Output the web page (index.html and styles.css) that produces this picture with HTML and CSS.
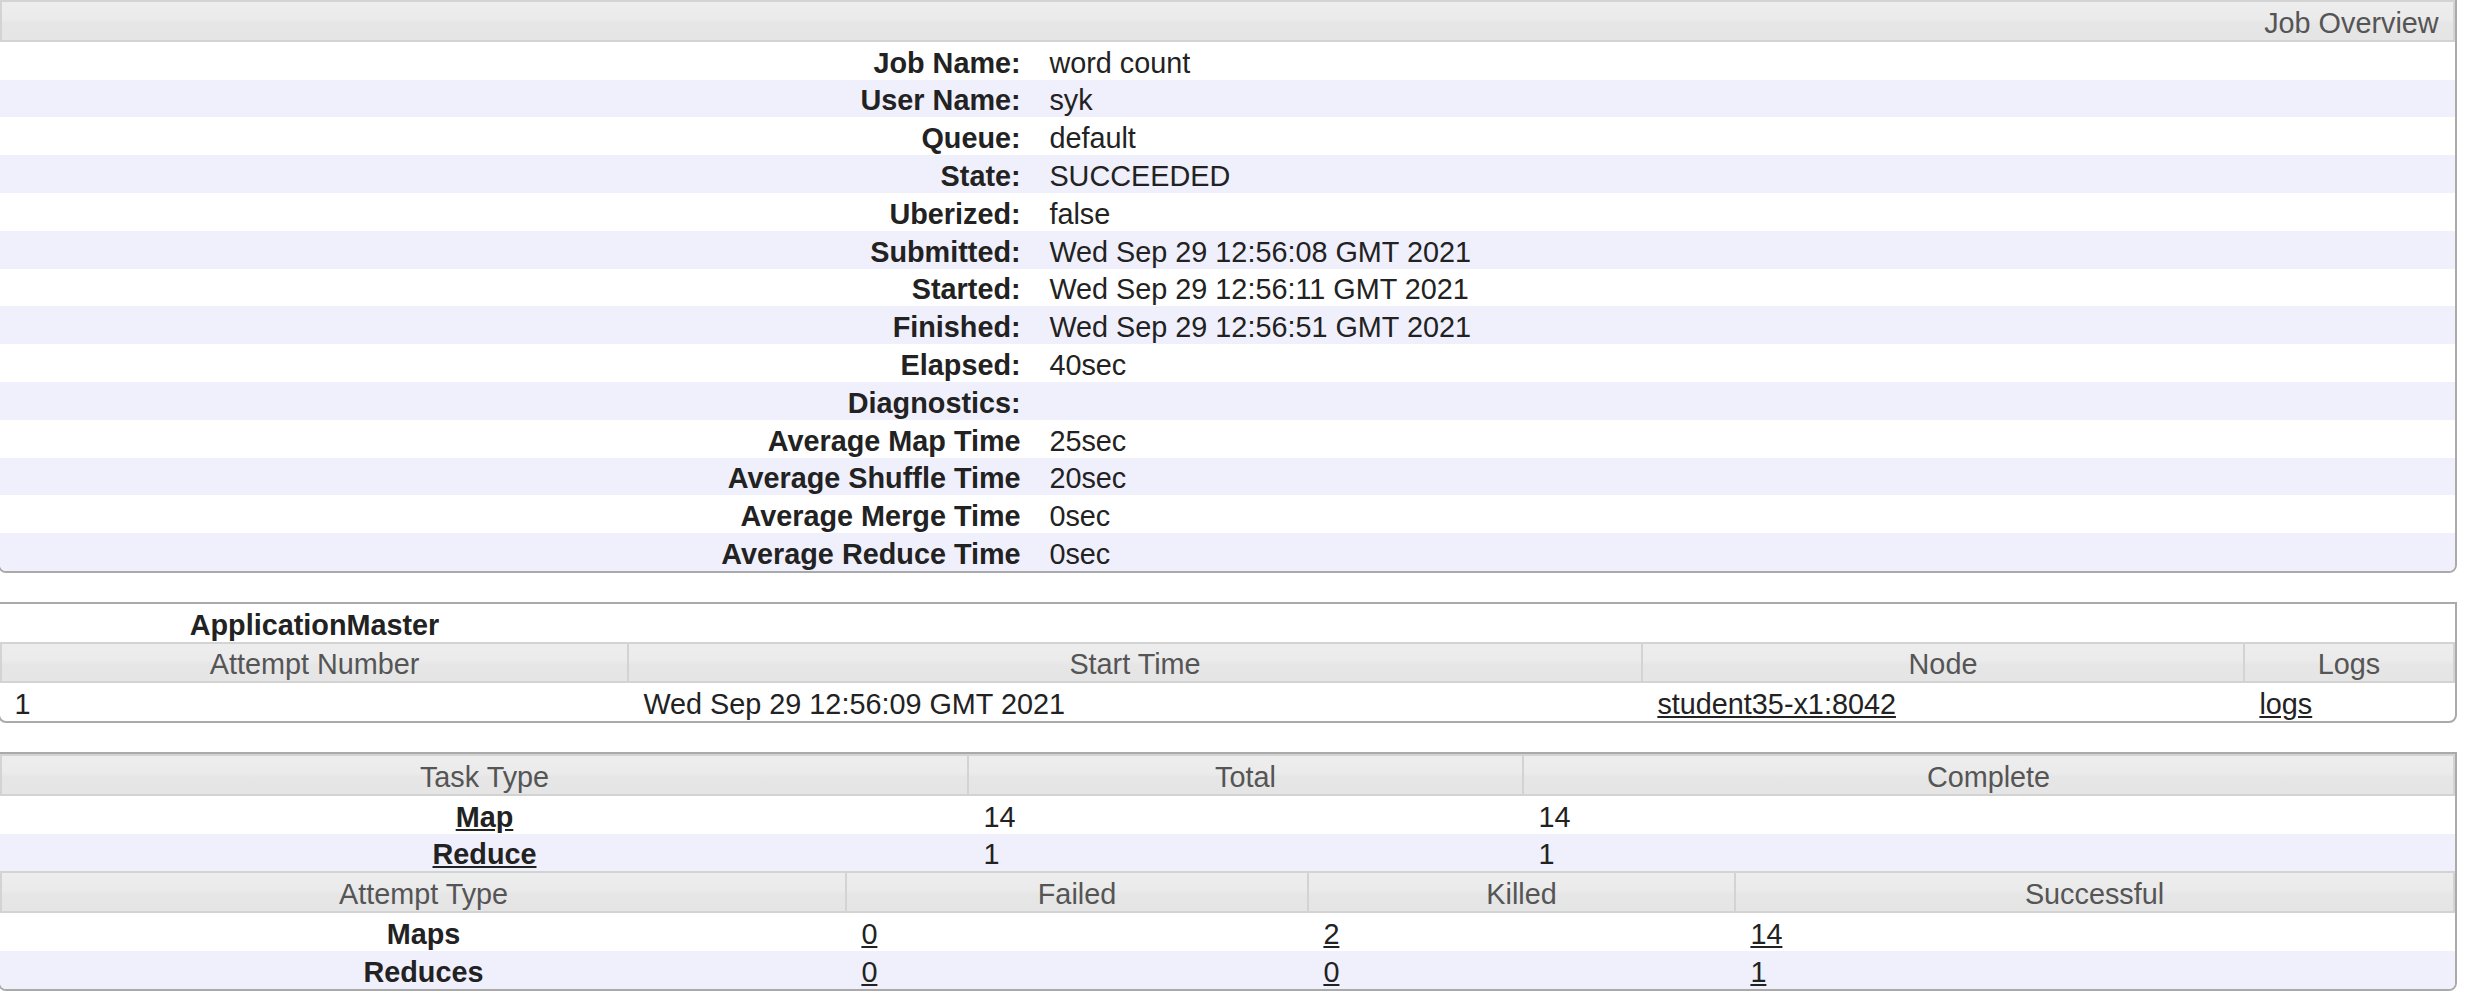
FILE: index.html
```html
<!DOCTYPE html>
<html>
<head>
<meta charset="utf-8">
<title>Job Overview</title>
<link rel="stylesheet" href="styles.css">
</head>
<body>
<div class="page">
  <div class="info-wrap">
    <table class="info">
      <colgroup><col class="c-label"><col></colgroup>
      <thead>
        <tr><th colspan="2" class="hd hd-first hd-right">Job Overview</th></tr>
      </thead>
      <tbody>
        <tr><th>Job Name:</th><td>word count</td></tr>
        <tr class="even"><th>User Name:</th><td>syk</td></tr>
        <tr><th>Queue:</th><td>default</td></tr>
        <tr class="even"><th>State:</th><td>SUCCEEDED</td></tr>
        <tr><th>Uberized:</th><td>false</td></tr>
        <tr class="even"><th>Submitted:</th><td>Wed Sep 29 12:56:08 GMT 2021</td></tr>
        <tr><th>Started:</th><td>Wed Sep 29 12:56:11 GMT 2021</td></tr>
        <tr class="even"><th>Finished:</th><td>Wed Sep 29 12:56:51 GMT 2021</td></tr>
        <tr><th>Elapsed:</th><td>40sec</td></tr>
        <tr class="even"><th>Diagnostics:</th><td></td></tr>
        <tr><th>Average Map Time</th><td>25sec</td></tr>
        <tr class="even"><th>Average Shuffle Time</th><td>20sec</td></tr>
        <tr><th>Average Merge Time</th><td>0sec</td></tr>
        <tr class="even"><th>Average Reduce Time</th><td>0sec</td></tr>
      </tbody>
    </table>
  </div>

  <div class="info-wrap">
    <table class="grid">
      <colgroup><col class="am-1"><col class="am-2"><col class="am-3"><col></colgroup>
      <tr><th>ApplicationMaster</th><td></td><td></td><td></td></tr>
      <tr>
        <th class="hd hd-first">Attempt Number</th>
        <th class="hd">Start Time</th>
        <th class="hd">Node</th>
        <th class="hd">Logs</th>
      </tr>
      <tr>
        <td>1</td>
        <td>Wed Sep 29 12:56:09 GMT 2021</td>
        <td><a href="#">student35-x1:8042</a></td>
        <td><a href="#">logs</a></td>
      </tr>
    </table>
  </div>

  <div class="info-wrap">
    <table class="grid">
      <colgroup><col class="tt-1"><col class="tt-2"><col></colgroup>
      <tr>
        <th class="hd hd-first">Task Type</th>
        <th class="hd">Total</th>
        <th class="hd">Complete</th>
      </tr>
      <tr>
        <th><a href="#">Map</a></th>
        <td>14</td>
        <td>14</td>
      </tr>
      <tr class="even">
        <th><a href="#">Reduce</a></th>
        <td>1</td>
        <td>1</td>
      </tr>
    </table>
    <table class="grid">
      <colgroup><col class="at-1"><col class="at-2"><col class="at-3"><col></colgroup>
      <tr>
        <th class="hd hd-first">Attempt Type</th>
        <th class="hd">Failed</th>
        <th class="hd">Killed</th>
        <th class="hd">Successful</th>
      </tr>
      <tr>
        <th>Maps</th>
        <td><a href="#">0</a></td>
        <td><a href="#">2</a></td>
        <td><a href="#">14</a></td>
      </tr>
      <tr class="even">
        <th>Reduces</th>
        <td><a href="#">0</a></td>
        <td><a href="#">0</a></td>
        <td><a href="#">1</a></td>
      </tr>
    </table>
  </div>
</div>
</body>
</html>
```

FILE: styles.css
```css
html, body {
  margin: 0;
  padding: 0;
  background: #ffffff;
}

body {
  font-family: "Liberation Sans", Arial, Helvetica, sans-serif;
  font-size: 28.8px;
  color: #222222;
}

.page {
  margin: -2px 0 0 -2px;
  width: 2459px;
}

.info-wrap {
  border: 2px solid #aaaaaa;
  border-radius: 0 0 8px 8px;
  background: #ffffff;
  margin-bottom: 28.8px;
  overflow: hidden;
}

table {
  width: 100%;
  border-collapse: separate;
  border-spacing: 0;
  table-layout: fixed;
}

th, td {
  padding: 4.8px 14.4px 1px;
  line-height: 32px;
  white-space: nowrap;
  overflow: hidden;
}

th {
  font-weight: bold;
  text-align: center;
}

td {
  text-align: left;
}

a {
  color: #222222;
  text-decoration: underline;
}

.even th,
.even td {
  background: #f0f0fc;
}

/* jQuery UI state-default header cells */
.hd {
  font-weight: normal;
  color: #555555;
  text-align: center;
  border-top: 2px solid #d3d3d3;
  border-bottom: 2px solid #d3d3d3;
  border-right: 2px solid #d3d3d3;
  background: linear-gradient(to bottom, #ededed 0%, #ebebeb 44%, #e6e6e6 56%, #e5e5e5 100%);
}

.hd-first {
  border-left: 2px solid #d3d3d3;
}

.hd-right {
  text-align: right;
}

/* Job overview info table */
.info .c-label {
  width: 1035px;
}

.info tbody th {
  text-align: right;
}

/* ApplicationMaster table */
.am-1 { width: 629px; }
.am-2 { width: 1014px; }
.am-3 { width: 602px; }

/* Task type table */
.tt-1 { width: 969px; }
.tt-2 { width: 555px; }

/* Attempt type table */
.at-1 { width: 847px; }
.at-2 { width: 462px; }
.at-3 { width: 427px; }
```
